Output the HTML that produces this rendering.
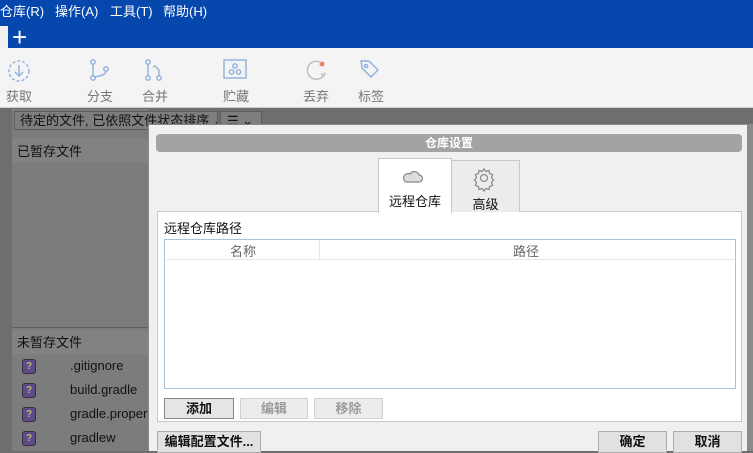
<!DOCTYPE html><html><head><meta charset="utf-8"><style>
*{box-sizing:border-box;margin:0;padding:0}
body{width:753px;height:451px;overflow:hidden;position:relative;font-family:"Liberation Sans","Noto Sans CJK SC",sans-serif;font-size:13px;color:#111;background:#6e6e6e}
.a{position:absolute}
.menu{left:0;top:0;width:753px;height:48px;background:#0547ad;color:#fff}
.menu span{position:absolute;top:1px;font-size:13px}
.tb{left:0;top:48px;width:753px;height:60px;background:#f4f4f4;border-bottom:1px solid #ccc}
.tb .l{position:absolute;top:38px;font-size:13px;color:#777}
.btn{position:absolute;height:21px;border:1px solid #adadad;background:#e1e1e1;text-align:center;font-size:13px;line-height:19px;font-weight:bold}
.dis{color:#9a9a9a;background:#ececec;border-color:#cfcfcf}
.q{position:absolute;left:22px;width:14px;height:15px;background:#5c4a8a;border:1px solid #333;border-radius:3px;color:#c8b870;font-size:10px;text-align:center;line-height:13px;font-weight:bold}
.f{position:absolute;left:70px;font-size:13px;color:#111}
</style></head><body>
<div class="a menu">
<span style="left:0">仓库(R)</span><span style="left:55px">操作(A)</span><span style="left:110px">工具(T)</span><span style="left:163px">帮助(H)</span>
<div class="a" style="left:0;top:26px;width:8px;height:22px;background:#f0f0f0"></div>
<span style="left:12px;top:23px;font-size:26px;line-height:28px">+</span>
</div>
<div class="a tb">
<svg class="a" style="left:0;top:0" width="400" height="36" fill="none" stroke="#8fb0dc" stroke-width="1.4">
<circle cx="19" cy="23" r="10" stroke-dasharray="3 2"/><path d="M19 17v11M15 24l4 4 4-4"/>
<circle cx="93" cy="14" r="2.2"/><circle cx="93" cy="30" r="2.2"/><circle cx="106" cy="21" r="2.2"/><path d="M93 16v12M106 23c0 4-6 5-12 6"/>
<circle cx="148" cy="14" r="2.2"/><circle cx="148" cy="30" r="2.2"/><circle cx="159" cy="30" r="2.2"/><path d="M148 16v12M159 28v-6l-4-4M153 19l2-1"/>
<rect x="224" y="12" width="22" height="18"/><circle cx="235" cy="18" r="2.2"/><circle cx="231.5" cy="24" r="2.2"/><circle cx="238.5" cy="24" r="2.2"/>
<path stroke="#bbb" d="M320 14a9 9 0 1 0 4 13"/><path stroke="#bbb" d="M321 26l3 1.5 1-3"/><circle cx="322" cy="16" r="2.5" fill="#f08070" stroke="none"/>
<path d="M361 13h8l9 9-7 7-9-9z"/><circle cx="366" cy="18" r="1.6"/>
</svg>
<span class="l" style="left:6px">获取</span><span class="l" style="left:87px">分支</span><span class="l" style="left:142px">合并</span><span class="l" style="left:223px">贮藏</span><span class="l" style="left:303px">丢弃</span><span class="l" style="left:358px">标签</span>
</div>
<div class="a" style="left:12px;top:109px;width:136px;height:342px;background:#7c7c7c"></div>
<div class="a" style="left:14px;top:111px;width:204px;height:19px;border:1px solid #5e5e5e;background:#7e7e7e;font-size:13px;line-height:17px;padding-left:5px;white-space:nowrap;overflow:hidden">待定的文件, 已依照文件状态排序 ⌄</div>
<div class="a" style="left:220px;top:111px;width:42px;height:19px;border:1px solid #5e5e5e;background:#7e7e7e;line-height:17px;padding-left:6px">☰ ⌄</div>
<div class="a" style="left:12px;top:138px;width:136px;height:24px;background:#828282;padding:3px 5px">已暂存文件</div>
<div class="a" style="left:12px;top:327px;width:136px;height:1px;background:#5e5e5e"></div>
<div class="a" style="left:12px;top:330px;width:136px;height:24px;background:#828282;padding:2px 5px">未暂存文件</div>
<div class="q" style="top:359px">?</div><div class="f" style="top:358px">.gitignore</div>
<div class="q" style="top:383px">?</div><div class="f" style="top:382px">build.gradle</div>
<div class="q" style="top:407px">?</div><div class="f" style="top:406px;width:78px;overflow:hidden;white-space:nowrap">gradle.properties</div>
<div class="q" style="top:431px">?</div><div class="f" style="top:430px">gradlew</div>
<div class="a" style="left:148px;top:124px;width:600px;height:327px;background:#f0f0f0;border:1px solid #888;border-bottom:none"></div>
<div class="a" style="left:748px;top:124px;width:5px;height:327px;background:#8a8a8a"></div>
<div class="a" style="left:156px;top:134px;width:586px;height:18px;background:#a3a3a3;border-radius:4px;color:#fff;font-weight:bold;text-align:center;font-size:12px;line-height:18px">仓库设置</div>
<div class="a" style="left:157px;top:211px;width:585px;height:211px;background:#fff;border:1px solid #c8c8c8"></div>
<div class="a" style="left:451px;top:160px;width:69px;height:52px;background:#ececec;border:1px solid #c8c8c8;border-bottom:none;text-align:center;padding-top:33px">高级</div>
<div class="a" style="left:378px;top:158px;width:74px;height:55px;background:#fff;border:1px solid #c8c8c8;border-bottom:none;text-align:center;padding-top:32px">远程仓库</div>
<svg class="a" style="left:400px;top:166px" width="110" height="26" fill="none" stroke="#888" stroke-width="1.2">
<path d="M6 16h13a3.5 3.5 0 0 0 0-7 5 5 0 0 0-9-1 4 4 0 0 0-4 8z" fill="#ddd"/>
<circle cx="84" cy="12" r="3.5"/><path d="M84 3l2 2.5 3-1 .5 3 3 1-1 3 2 2.5-2 2.5 1 3-3 1-.5 3-3-1-2 2.5-2-2.5-3 1-.5-3-3-1 1-3-2-2.5 2-2.5-1-3 3-1 .5-3 3 1z"/>
</svg>
<div class="a" style="left:164px;top:218px;font-size:13px">远程仓库路径</div>
<div class="a" style="left:164px;top:239px;width:572px;height:150px;border:1px solid #a9c3dd;background:#fff"></div>
<div class="a" style="left:166px;top:240px;width:568px;height:20px;border-bottom:1px solid #e5e5e5;color:#666"><span class="a" style="left:64px;top:1px">名称</span><span class="a" style="left:347px;top:1px">路径</span></div>
<div class="a" style="left:319px;top:240px;width:1px;height:20px;background:#e5e5e5"></div>
<div class="btn" style="left:164px;top:398px;width:70px;background:#e5e5e5;border-color:#888">添加</div>
<div class="btn dis" style="left:240px;top:398px;width:68px">编辑</div>
<div class="btn dis" style="left:314px;top:398px;width:69px">移除</div>
<div class="btn" style="left:157px;top:431px;width:104px;height:22px">编辑配置文件...</div>
<div class="btn" style="left:598px;top:431px;width:69px;height:22px">确定</div>
<div class="btn" style="left:673px;top:431px;width:69px;height:22px">取消</div>
</body></html>
